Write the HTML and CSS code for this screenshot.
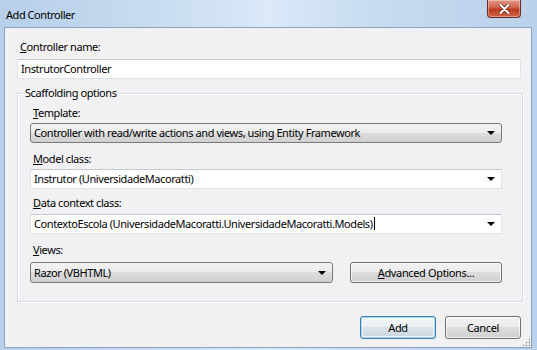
FILE: index.html
```html
<!DOCTYPE html>
<html lang="en">
<head>
  <meta charset="UTF-8">
  <title>Add Controller</title>
  <link rel="stylesheet" href="styles.css">
</head>
<body>
  <div class="window">
    <div class="titlebar">
      <span class="title">Add Controller</span>
      <button class="close" type="button" aria-label="Close">
        <svg width="11" height="10" viewBox="0 0 11 10">
          <path d="M1.5 1 L9.5 9 M9.5 1 L1.5 9" stroke="#5a2a20" stroke-width="3.4" stroke-linecap="round"/>
          <path d="M1.5 1 L9.5 9 M9.5 1 L1.5 9" stroke="#ffffff" stroke-width="2" stroke-linecap="round"/>
        </svg>
      </button>
    </div>

    <div class="client">
      <label class="label first"><u>C</u>ontroller name:</label>
      <div class="textbox wide">InstrutorController</div>

      <fieldset class="group">
        <legend>Scaffolding options</legend>

        <label class="label tpl"><u>T</u>emplate:</label>
        <div class="combo">
          <span>Controller with read/write actions and views, using Entity Framework</span>
          <i class="arrow"></i>
        </div>

        <label class="label model"><u>M</u>odel class:</label>
        <div class="textbox edit">
          <span>Instrutor (UniversidadeMacoratti)</span>
          <i class="arrow"></i>
        </div>

        <label class="label ctx"><u>D</u>ata context class:</label>
        <div class="textbox edit">
          <span>ContextoEscola (UniversidadeMacoratti.UniversidadeMacoratti.Models)<b class="caret"></b></span>
          <i class="arrow"></i>
        </div>

        <label class="label views"><u>V</u>iews:</label>
        <div class="views-row">
          <div class="combo views-combo">
            <span>Razor (VBHTML)</span>
            <i class="arrow"></i>
          </div>
          <button class="btn advanced" type="button"><u>A</u>dvanced Options...</button>
        </div>
      </fieldset>

      <div class="actions">
        <button class="btn default" type="button">Add</button>
        <button class="btn" type="button">Cancel</button>
      </div>
      <div class="grip"></div>
    </div>
  </div>
</body>
</html>
```

FILE: styles.css
```css
body {
  margin: 0;
  font-family: "Noto Sans", "Open Sans", sans-serif;
  font-size: 11px;
  letter-spacing: -0.42px;
  color: #000;
  background: #bcd3ec;
}
.window {
  width: 537px;
  height: 350px;
  display: flex;
  flex-direction: column;
  background: linear-gradient(90deg, #b7cfe9 0%, #c9dcf1 30%, #dbe9f8 50%, #c7dbf1 70%, #b9d1ea 100%);
  overflow: hidden;
}
.titlebar {
  height: 27px;
  display: flex;
  align-items: flex-start;
  justify-content: space-between;
  padding: 0 16px 0 6px;
}
.title {
  margin-top: 7px;
  font-size: 11px;
  line-height: 16px;
  letter-spacing: -0.45px;
}
.close {
  width: 34px;
  height: 18px;
  margin: 0;
  padding: 0;
  border: 1px solid #6b2a22;
  border-top: none;
  border-radius: 0 0 4px 4px;
  background: linear-gradient(#e09a88 0%, #cf5f48 45%, #bd3a20 55%, #d06548 100%);
  box-shadow: inset 0 0 0 1px rgba(255, 255, 255, 0.35);
  display: flex;
  align-items: center;
  justify-content: center;
}
.client {
  position: relative;
  flex: 1;
  margin: 0 5px 2px 4px;
  border: 1px solid #8ea4bd;
  background: #f1f0f3;
  padding: 11px 10px 0 12px;
  display: flex;
  flex-direction: column;
}
.label {
  display: block;
  line-height: 16px;
  padding-left: 3px;
}
.textbox, .combo {
  box-sizing: border-box;
  height: 20px;
  line-height: 18px;
  padding-left: 3px;
  display: flex;
  align-items: center;
  justify-content: space-between;
}
.textbox {
  background: #fff;
  border: 1px solid #dfe4ea;
  border-top-color: #c3c9d2;
}
.wide {
  margin-top: 4px;
  width: 504px;
}
.edit {
  width: 472px;
}
.combo {
  width: 472px;
  border: 1px solid #7a7a7a;
  border-radius: 3px;
  background: linear-gradient(#f3f3f3 0%, #ebebeb 50%, #dddddd 50%, #d0d0d0 100%);
}
.arrow {
  width: 0;
  height: 0;
  margin-right: 6px;
  border-left: 4px solid transparent;
  border-right: 4px solid transparent;
  border-top: 4px solid #000;
}
.caret {
  display: inline-block;
  width: 1px;
  height: 13px;
  background: #000;
  vertical-align: -2px;
  margin-left: 1px;
}
.group {
  margin: 6px 0 0;
  padding: 0 0 18px 12px;
  width: 506px;
  box-sizing: border-box;
  border: 1px solid #d5dbe2;
  box-shadow: 1px 1px 0 #fff, inset 1px 1px 0 #fff;
}
.group legend {
  padding: 0 2px;
  margin-left: -7px;
  line-height: 16px;
  font-size: 11px;
}
.tpl { margin-top: 4px; }
.tpl + .combo { margin-top: 2px; }
.model { margin-top: 8px; }
.model + .textbox { margin-top: 2px; }
.ctx { margin-top: 6px; }
.ctx + .textbox { margin-top: 3px; }
.views { margin-top: 8px; }
.views-row {
  margin-top: 4px;
  display: flex;
  gap: 17px;
}
.views-combo {
  width: 303px;
  height: 21px;
}
.btn {
  box-sizing: border-box;
  margin: 0;
  padding: 0;
  height: 21px;
  font-family: inherit;
  font-size: 11px;
  letter-spacing: -0.35px;
  color: #000;
  border: 1px solid #707070;
  border-radius: 3px;
  background: linear-gradient(#f2f2f2 0%, #ebebeb 50%, #dddddd 50%, #cfcfcf 100%);
  box-shadow: inset 0 0 0 1px rgba(255, 255, 255, 0.7);
}
.advanced {
  width: 152px;
}
.actions {
  margin-top: 14px;
  display: flex;
  justify-content: flex-end;
  gap: 9px;
}
.actions .btn {
  width: 76px;
  height: 23px;
}
.actions .default {
  border-color: #3c7fb1;
  box-shadow: inset 0 0 0 1px #a6d5f2, inset 0 0 0 2px rgba(255, 255, 255, 0.6);
  background: linear-gradient(#f4f8fb 0%, #e8eef3 50%, #dbe3ea 50%, #ccd6df 100%);
}
.grip {
  position: absolute;
  right: 1px;
  bottom: 1px;
  width: 8px;
  height: 8px;
  background: radial-gradient(circle, #a0a0a0 0.8px, transparent 1.2px) 0 0 / 3px 3px;
  clip-path: polygon(100% 0, 100% 100%, 0 100%);
}
```
